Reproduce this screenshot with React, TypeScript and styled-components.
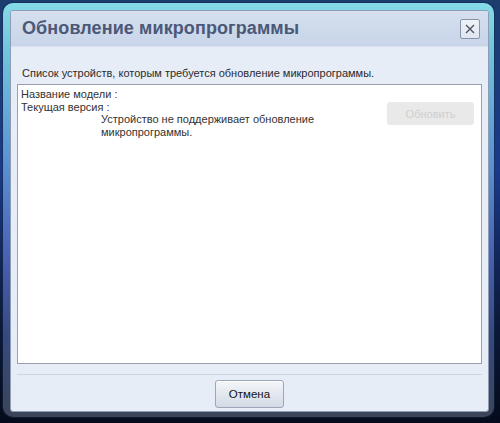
import styled, { createGlobalStyle } from "styled-components"

const GlobalStyle = createGlobalStyle`
  html, body {
    margin: 0;
    padding: 0;
    width: 500px;
    height: 423px;
    overflow: hidden;
    background: linear-gradient(180deg, #1c3d6e 0%, #1a3a8a 40%, #0c1a3c 75%, #050b1c 100%);
    font-family: "Liberation Sans", Arial, sans-serif;
  }
`

const Frame = styled.div`
  box-sizing: border-box;
  margin: 3px 0 0 3px;
  width: 491px;
  height: 414px;
  padding: 7px 5px 5px 7px;
  border-radius: 10px;
  background: linear-gradient(
    180deg,
    #86dbe8 0%,
    #6fc4dc 12%,
    #5a8fd0 40%,
    #4a63b4 60%,
    #364a80 80%,
    #3c4456 100%
  );
  box-shadow: 0 0 0 1px rgba(20, 40, 70, 0.5);
`

const Dialog = styled.div`
  box-sizing: border-box;
  height: 100%;
  display: flex;
  flex-direction: column;
  border: 1px solid #8e9cb6;
  border-radius: 3px;
  background: #e7edf7;
  overflow: hidden;
`

const TitleBar = styled.div`
  display: flex;
  align-items: center;
  justify-content: space-between;
  height: 35px;
  padding: 0 8px 0 11px;
  background: linear-gradient(180deg, #d5dfee 0%, #c8d5e9 100%);
  border-bottom: 1px solid #d9e1ee;
`

const Title = styled.h1`
  margin: 0;
  font-size: 18px;
  font-weight: bold;
  color: #4b5878;
  letter-spacing: 0.1px;
`

const CloseButton = styled.button`
  box-sizing: border-box;
  width: 20px;
  height: 20px;
  padding: 0;
  display: flex;
  align-items: center;
  justify-content: center;
  border: 1px solid #8993a6;
  border-radius: 2px;
  background: linear-gradient(180deg, #eef2f8 0%, #dfe6f1 100%);
  svg {
    display: block;
  }
`

const Body = styled.div`
  flex: 1;
  display: flex;
  flex-direction: column;
  padding: 0 6px 0 6px;
`

const Caption = styled.p`
  margin: 19px 0 4px 5px;
  font-size: 11px;
  line-height: 14px;
  color: #2b2b2b;
`

const ListBox = styled.div`
  box-sizing: border-box;
  height: 280px;
  display: flex;
  justify-content: space-between;
  padding: 3px 7px 0 3px;
  background: #ffffff;
  border: 1px solid #9aa1ab;
`

const InfoColumn = styled.div`
  font-size: 11px;
  line-height: 12.6px;
  color: #333333;
`

const InfoLine = styled.div``

const Message = styled.div`
  margin: 0 0 0 80px;
  width: 230px;
`

const UpdateButton = styled.button`
  box-sizing: border-box;
  margin-top: 14px;
  width: 87px;
  height: 23px;
  border: none;
  border-radius: 3px;
  background: #e9e9e9;
  color: #cfcfcf;
  font-family: "Liberation Sans", Arial, sans-serif;
  font-size: 11px;
`

const Footer = styled.div`
  display: flex;
  justify-content: center;
  margin-top: 10px;
  padding-top: 5px;
  border-top: 1px solid #cfd6e2;
`

const CancelButton = styled.button`
  box-sizing: border-box;
  width: 69px;
  height: 28px;
  border: 1px solid #9ba6b8;
  border-radius: 3px;
  background: linear-gradient(180deg, #f4f6f9 0%, #e3e8ef 50%, #d3dae5 100%);
  box-shadow: inset 0 1px 0 #ffffff;
  color: #111111;
  font-family: "Liberation Sans", Arial, sans-serif;
  font-size: 11.5px;
`

const App = () => {
  return (
    <>
      <GlobalStyle />
      <Frame>
        <Dialog>
          <TitleBar>
            <Title>Обновление микропрограммы</Title>
            <CloseButton aria-label="close">
              <svg width="12" height="12" viewBox="0 0 12 12">
                <path d="M2 2 L10 10 M10 2 L2 10" stroke="#4a5260" strokeWidth="1.3" />
              </svg>
            </CloseButton>
          </TitleBar>
          <Body>
            <Caption>Список устройств, которым требуется обновление микропрограммы.</Caption>
            <ListBox>
              <InfoColumn>
                <InfoLine>Название модели :</InfoLine>
                <InfoLine>Текущая версия :</InfoLine>
                <Message>Устройство не поддерживает обновление микропрограммы.</Message>
              </InfoColumn>
              <UpdateButton disabled>Обновить</UpdateButton>
            </ListBox>
            <Footer>
              <CancelButton>Отмена</CancelButton>
            </Footer>
          </Body>
        </Dialog>
      </Frame>
    </>
  )
}

export default App
